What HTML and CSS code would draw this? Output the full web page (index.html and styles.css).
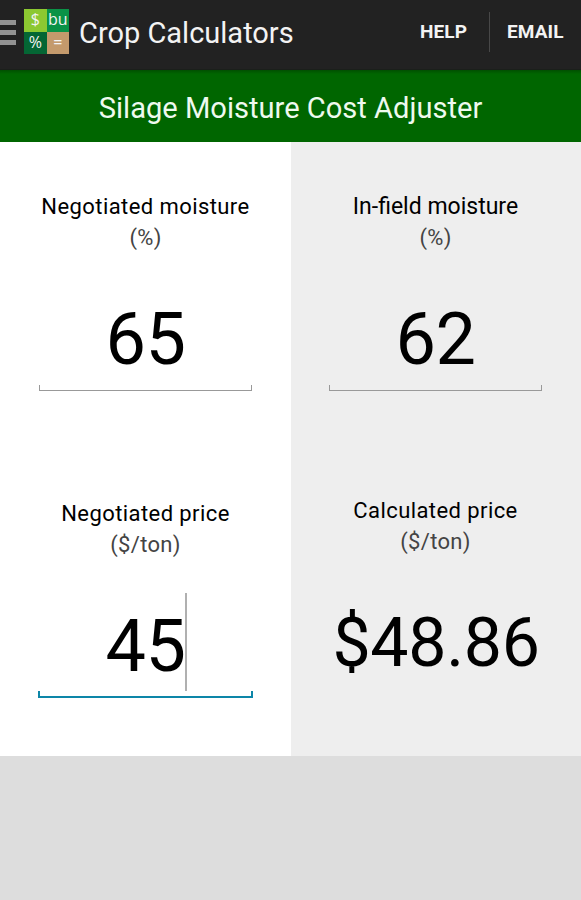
FILE: index.html
```
<!DOCTYPE html>
<html lang="en">
<head>
<meta charset="utf-8">
<title>Crop Calculators</title>
<link rel="stylesheet" href="styles.css">
</head>
<body>
<header class="bar">
  <div class="menu"><i></i><i></i><i></i></div>
  <div class="logo"><span class="a">$</span><span class="b">bu</span><span class="c">%</span><span class="d">=</span></div>
  <h1>Crop Calculators</h1>
  <span class="action help">HELP</span>
  <span class="action email">EMAIL</span>
</header>
<h2>Silage Moisture Cost Adjuster</h2>
<main>
  <section class="cell">
    <p class="label">Negotiated moisture</p><p class="unit">(%)</p>
    <div class="value">65</div><div class="line"></div>
  </section>
  <section class="cell grey">
    <p class="label joined">In-field moisture</p><p class="unit">(%)</p>
    <div class="value">62</div><div class="line"></div>
  </section>
  <section class="cell">
    <p class="label">Negotiated price</p><p class="unit">($/ton)</p>
    <div class="value">45<span class="caret"></span></div><div class="line active"></div>
  </section>
  <section class="cell grey result">
    <p class="label">Calculated price</p><p class="unit">($/ton)</p>
    <div class="value">$48.86</div>
  </section>
</main>
</body>
</html>
```
FILE: styles.css
```
* { box-sizing: border-box; }
body { margin: 0; background: #ddd; font-family: Roboto, sans-serif; color: #000; }
h1, h2, p { margin: 0; font-weight: 400; }
.bar { height: 70px; background: #222; display: flex; align-items: center; color: #f3f3f3; padding-bottom: 6px; border-bottom: 1px solid #1b1f1b; }
.menu { width: 16px; display: grid; gap: 5px; padding-top: 2px; }
.menu i { height: 5px; background: #929292; }
.logo { margin-left: 8px; width: 45px; height: 45px; display: grid; grid-template-columns: 1fr 1fr; grid-template-rows: 1fr 1fr; font: 16px/21px "Open Sans", sans-serif; text-align: center; }
.a { background: #8cc831; }
.b { background: #0a9247; }
.c { background: #046634; }
.d { background: #c49a6c; }
h1 { margin-left: 10px; font-size: 29px; line-height: 36px; padding-top: 2px; flex: 1; white-space: nowrap; }
.action { font-size: 19px; font-weight: 700; height: 40px; line-height: 40px; letter-spacing: 0.1px; }
.help { width: 70px; border-right: 1px solid #484848; }
.email { width: 91px; padding-left: 17px; }
h2 { height: 72px; background: linear-gradient(#005000, #060 4px); color: #effaef; font-size: 29.1px; line-height: 76px; text-align: center; }
main { display: grid; grid-template-columns: 291px 290px; grid-template-rows: 307px 307px; }
.cell { background: #fff; padding: 49px 39px 0; text-align: center; }
.grey { background: #eee; padding-left: 38px; }
.label, .unit { font-size: 22px; line-height: 31px; white-space: nowrap; }
.label { letter-spacing: 0.42px; }
.joined { font-size: 23px; letter-spacing: 0; }
.unit { color: #444; letter-spacing: 0.3px; }
.value { font-size: 72px; line-height: 108px; height: 98px; margin-top: 33px; white-space: nowrap; letter-spacing: -0.5px; }
.line { height: 6px; margin-top: 1px; border: 1px solid #999; border-top: 0; }
.active { height: 7px; margin: 0 -1px; border: 2px solid #0d86a8; border-top: 0; }
.caret { display: inline-block; width: 2px; height: 98px; margin-right: -2px; background: #b0b0b0; vertical-align: top; }
.result { padding-top: 46px; }
.result .value { font-size: 68px; line-height: 106px; letter-spacing: -0.3px; padding-left: 1px; }
```
